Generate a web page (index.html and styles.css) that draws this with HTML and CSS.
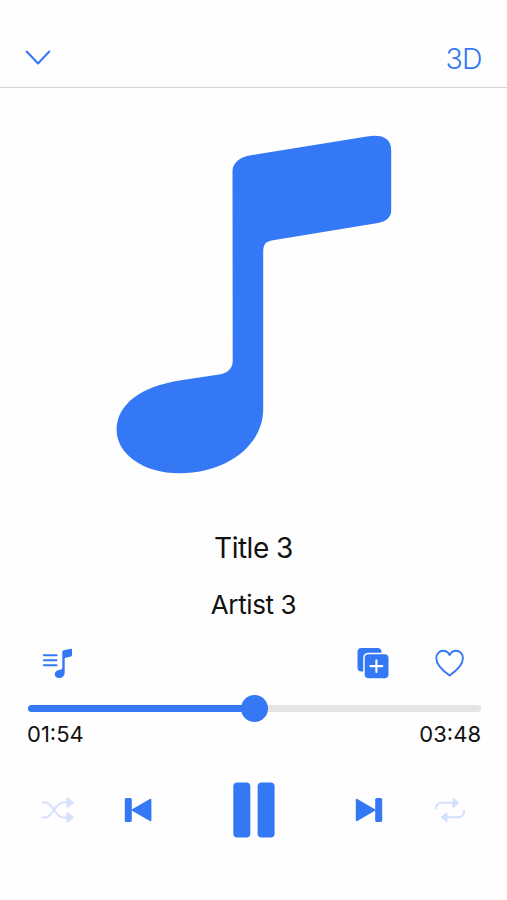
FILE: index.html
```html
<!DOCTYPE html>
<html lang="en">

<head>
    <meta charset="UTF-8">
    <meta name="viewport" content="width=device-width, initial-scale=1.0">
    <title>Music Player</title>
    <link rel="stylesheet" href="styles.css">
</head>

<body>
    <header class="topbar">
        <button class="close" aria-label="Close">
            <svg width="26" height="16" viewBox="0 0 26 16"><path d="M1.7 1.5L13 13.5L24.3 1.5" fill="none" stroke="currentColor" stroke-width="2" stroke-linecap="round" stroke-linejoin="round"/></svg>
        </button>
        <button class="mode">3D</button>
    </header>

    <!-- artwork -->
    <div class="artwork">
        <svg width="276" height="340" viewBox="116 135 276 340"><path d="M232.5 171C232.5 163 240 157 251 155.3L367 136.4C382 134 391.2 138 391.2 150V211C391.2 217 386 221.7 378 223L273 240.3C266 241.5 263.2 244 263.2 252V409C263.2 446 226 473.3 180 473.3C142 473.3 116.6 453 116.6 430C116.6 405 140 386.5 181 380.3L219 374.6C227 373.4 232.7 369 232.7 361Z" fill="currentColor"/></svg>
    </div>

    <div class="info">
        <h1>Title 3</h1>
        <h2>Artist 3</h2>
    </div>

    <div class="actions">
        <button aria-label="Playlist">
            <svg width="32" height="32" viewBox="0 0 32 32"><path d="M1.8 8.2H14.6M1.8 13.3H14.6M1.8 18.3H14.6" stroke="currentColor" stroke-width="1.9" stroke-linecap="round"/><path d="M20.3 5Q20.3 3.6 21.6 3.2L28.8 1.7Q30 1.5 30 2.7V8.3Q30 9.3 29 9.5L22.7 11V25.2C22.7 28.7 20.3 31.1 17.1 31.1C14.4 31.1 12.7 29.5 12.7 27.3C12.7 24.9 14.5 23.4 17 22.9L19.1 22.5Q20.3 22.3 20.3 20.8Z" fill="currentColor"/></svg>
        </button>
        <button class="add" aria-label="Add">
            <svg width="32" height="32" viewBox="0 0 32 32"><rect x="0.5" y="1" width="24" height="23.5" rx="4" fill="currentColor"/><rect x="6.2" y="5.7" width="26" height="27" rx="5" fill="#fefefe"/><rect x="7.7" y="7.3" width="23.8" height="24" rx="4" fill="currentColor"/><path d="M19.4 13.2V25M13.4 19.1H25.4" stroke="#fefefe" stroke-width="2.1" stroke-linecap="round"/></svg>
        </button>
        <button aria-label="Like">
            <svg width="32" height="32" viewBox="0 0 32 32"><path d="M15.6 28.5C9.1 24 2.3 18 2.3 11.3C2.3 6.8 5.3 3.8 9.1 3.8C12 3.8 14.3 5.3 15.6 8C16.9 5.3 19.2 3.8 22.1 3.8C25.9 3.8 28.9 6.8 28.9 11.3C28.9 18 22.1 24 15.6 28.5Z" fill="none" stroke="currentColor" stroke-width="1.9" stroke-linejoin="round"/></svg>
        </button>
    </div>

    <div class="progress">
        <div class="track">
            <div class="played" style="width: 50%"></div>
        </div>
        <div class="times">
            <span>01:54</span>
            <span>03:48</span>
        </div>
    </div>

    <div class="controls">
        <button class="off" aria-label="Shuffle">
            <svg width="34" height="28" viewBox="0 0 34 28"><path d="M2.5 6.6H5.5C12.5 6.6 15.5 21.4 22.5 21.4H27M2.5 21.4H5.5C12.5 21.4 15.5 6.6 22.5 6.6H27" fill="none" stroke="currentColor" stroke-width="2" stroke-linecap="round"/><path d="M27.2 2L33 6.6L27.2 11.2ZM27.2 16.8L33 21.4L27.2 26Z" fill="currentColor" stroke="currentColor" stroke-width="1.4" stroke-linejoin="round"/></svg>
        </button>
        <button aria-label="Previous">
            <svg width="28" height="26" viewBox="0 0 28 26"><rect x="0.8" y="1" width="7" height="24" rx="1.5" fill="currentColor"/><path d="M8.6 13L26.4 2.8V23.2Z" fill="currentColor" stroke="currentColor" stroke-width="2" stroke-linejoin="round"/></svg>
        </button>
        <button class="pause" aria-label="Pause">
            <svg width="42" height="56" viewBox="0 0 42 56"><rect x="0.3" y="0.5" width="17" height="55" rx="4" fill="currentColor"/><rect x="24.6" y="0.5" width="17" height="55" rx="4" fill="currentColor"/></svg>
        </button>
        <button aria-label="Next">
            <svg width="28" height="26" viewBox="0 0 28 26"><rect x="20.2" y="1" width="7" height="24" rx="1.5" fill="currentColor"/><path d="M19.4 13L1.8 2.8V23.2Z" fill="currentColor" stroke="currentColor" stroke-width="2" stroke-linejoin="round"/></svg>
        </button>
        <button class="off" aria-label="Repeat">
            <svg width="34" height="28" viewBox="0 0 34 28"><path d="M3 12.5C3 8.5 5 6.8 9 6.8H20M31 14.5C31 19 29 21.3 25 21.3H14" fill="none" stroke="currentColor" stroke-width="2" stroke-linecap="round"/><path d="M20 2.2L26 6.8L20 11.4ZM14 16.7L8 21.3L14 25.9Z" fill="currentColor" stroke="currentColor" stroke-linejoin="round"/></svg>
        </button>
    </div>
</body>

</html>
```

FILE: styles.css
```css
body {
    margin: 0;
    background-color: #fefefe;
    color: #111;
    font-family: Inter, "Liberation Sans", sans-serif;
}

button {
    display: flex;
    align-items: center;
    justify-content: center;
    padding: 0;
    border: none;
    background: none;
    color: #3478f6;
    font-family: inherit;
    cursor: pointer;
}

svg {
    display: block;
}

.topbar {
    display: flex;
    justify-content: space-between;
    align-items: center;
    box-sizing: border-box;
    height: 88px;
    padding: 29px 25px 0 25px;
    border-bottom: 1px solid #d5d5d5;
}

.mode {
    font-size: 28.5px;
    font-weight: 350;
    letter-spacing: -0.6px;
}

.artwork {
    display: flex;
    justify-content: center;
    padding-top: 47px;
    height: 390px;
    color: #3478f6;
}

.info {
    text-align: center;
}

.info h1,
.info h2 {
    margin: 0;
    font-weight: 400;
}

.info h1 {
    padding-top: 3px;
    font-size: 28px;
    line-height: 40px;
    letter-spacing: -0.5px;
}

.info h2 {
    padding-top: 17px;
    font-size: 26px;
    line-height: 40px;
    letter-spacing: -0.4px;
}

.actions {
    display: flex;
    padding: 22px 41px 0 42px;
}

.add {
    margin-left: auto;
    margin-right: 45px;
}

.progress {
    padding: 26px 26px 0 28px;
}

.track {
    height: 7px;
    border-radius: 4px;
    background-color: #e4e4e4;
}

.played {
    display: flex;
    align-items: center;
    justify-content: flex-end;
    height: 7px;
    border-radius: 4px;
    background-color: #3478f6;
}

/* slider thumb */
.played::after {
    content: "";
    flex: none;
    width: 27px;
    height: 27px;
    margin-right: -13.5px;
    border-radius: 50%;
    background-color: #3478f6;
}

.times {
    display: flex;
    justify-content: space-between;
    margin: 8px 0 0 -1px;
    font-size: 22px;
    line-height: 28px;
}

.controls {
    display: flex;
    justify-content: center;
    align-items: center;
    gap: 50px;
    padding-top: 34px;
}

.pause {
    margin: 0 30px 0 31px;
}

.off {
    color: #d3e1fc;
}
```
